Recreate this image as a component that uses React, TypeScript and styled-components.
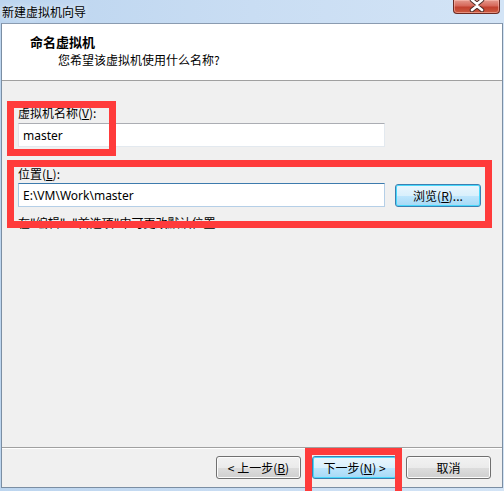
import React from "react";
import styled, { createGlobalStyle, css } from "styled-components";

const Global = createGlobalStyle`
  html, body { margin: 0; padding: 0; background: #c4dbf3; }
  body { font-family: "Noto Sans CJK SC", "Noto Sans", sans-serif; font-size: 12px; color: #000; }
`;

const Win = styled.div`
  position: relative;
  width: 504px;
  height: 491px;
  overflow: hidden;
  display: flex;
  flex-direction: column;
  background: linear-gradient(90deg, #bcd5ef 0%, #c9ddf3 50%, #d3e4f6 100%);
`;

const TitleBar = styled.div`
  height: 23px;
  display: flex;
  align-items: flex-start;
  justify-content: space-between;
  padding-left: 2px;
  box-sizing: border-box;
`;

const TitleText = styled.span`
  font-size: 12px;
  line-height: 23px;
  color: #000;
  text-shadow: 0 0 6px rgba(255, 255, 255, 0.9);
`;

const CloseBtn = styled.div`
  width: 47px;
  height: 14px;
  margin-right: 4px;
  box-sizing: border-box;
  border: 1px solid #6b2a22;
  border-top: none;
  border-radius: 0 0 4px 4px;
  background: linear-gradient(#e59a8d 0%, #d6685a 45%, #c2412f 55%, #cc5a3f 100%);
  display: flex;
  align-items: flex-start;
  justify-content: center;
  box-shadow: inset 0 0 0 1px rgba(255, 200, 190, 0.5);
`;

const Client = styled.div`
  flex: 1;
  margin: 0 1px 3px 1px;
  border: 1px solid #7b8ea3;
  border-top-color: #8a9bb0;
  background: #f0f0f0;
  display: flex;
  flex-direction: column;
`;

const Header = styled.div`
  height: 57px;
  background: #fff;
  border-bottom: 1px solid #a0a0a0;
  padding: 9px 0 0 28px;
  box-sizing: border-box;
  flex: none;
`;

const HeadTitle = styled.div`
  font-size: 13px;
  font-weight: bold;
  line-height: 17px;
`;

const HeadSub = styled.div`
  font-size: 12px;
  line-height: 16px;
  margin: 2px 0 0 28px;
`;

const Body = styled.div`
  flex: 1;
  padding: 24px 0 0 16px;
  display: flex;
  flex-direction: column;
  align-items: flex-start;
`;

const Label = styled.div<{ $top: number }>`
  font-size: 12px;
  line-height: 15px;
  margin-top: ${(p) => p.$top}px;
`;

const Row = styled.div<{ $top?: number }>`
  display: flex;
  align-items: center;
  gap: 10px;
  margin-top: ${(p) => p.$top ?? 2}px;
`;

const Input = styled.div<{ $focused?: boolean }>`
  width: 367px;
  height: 24px;
  box-sizing: border-box;
  background: #fff;
  padding-left: 4px;
  display: flex;
  align-items: center;
  font-family: "Noto Sans", "Noto Sans CJK SC", sans-serif;
  font-size: 12px;
  border: 1px solid #e3e9ef;
  border-top-color: #abadb3;
  border-left-color: #e2e3ea;
  ${(p) =>
    p.$focused &&
    css`
      border-color: #b5cfe7;
      border-top-color: #3d7bad;
      border-left-color: #a4c9e3;
    `}
`;

const Btn = styled.div<{ $default?: boolean; $w?: number; $mr?: number }>`
  width: ${(p) => p.$w ?? 85}px;
  height: 23px;
  box-sizing: border-box;
  margin-right: ${(p) => p.$mr ?? 0}px;
  border: 1px solid #707070;
  border-radius: 3px;
  display: flex;
  align-items: center;
  justify-content: center;
  font-size: 12px;
  background: linear-gradient(#f2f2f2 0%, #ebebeb 50%, #dddddd 51%, #cfcfcf 100%);
  box-shadow: inset 0 0 0 1px #fcfcfc;
  ${(p) =>
    p.$default &&
    css`
      border-color: #3c7fb1;
      background: linear-gradient(#eaf6fd 0%, #d9f0fc 50%, #bee6fd 51%, #a7d9f5 100%);
      box-shadow: inset 0 0 0 1px #48d8fb;
    `}
`;

const Hint = styled.div`
  margin-top: 8px;
  font-size: 12px;
  line-height: 15px;
  color: #000;
`;

const Footer = styled.div`
  height: 40px;
  flex: none;
  border-top: 1px solid #a0a0a0;
  box-shadow: inset 0 1px 0 #ffffff;
  box-sizing: border-box;
  display: flex;
  justify-content: flex-end;
  align-items: flex-start;
  padding: 8px 11px 0 0;
`;

const Mark = styled.div<{ $x: number; $y: number; $w: number; $h: number }>`
  position: absolute;
  left: ${(p) => p.$x}px;
  top: ${(p) => p.$y}px;
  width: ${(p) => p.$w}px;
  height: ${(p) => p.$h}px;
  border: 7px solid #ff3b3b;
  box-sizing: border-box;
  pointer-events: none;
`;

export default function App() {
  return (
    <>
      <Global />
      <Win>
        <TitleBar>
          <TitleText>新建虚拟机向导</TitleText>
          <CloseBtn>
            <svg width="16" height="12" viewBox="0 0 16 12">
              <path
                d="M3 0 L8 4 L13 0 M3 10 L8 6 L13 10"
                stroke="#4a2a26"
                strokeWidth="4.5"
                fill="none"
                strokeLinecap="round"
              />
              <path
                d="M3 0 L8 4 L13 0 M3 10 L8 6 L13 10"
                stroke="#ffffff"
                strokeWidth="2.6"
                fill="none"
                strokeLinecap="round"
              />
            </svg>
          </CloseBtn>
        </TitleBar>
        <Client>
          <Header>
            <HeadTitle>命名虚拟机</HeadTitle>
            <HeadSub>您希望该虚拟机使用什么名称?</HeadSub>
          </Header>
          <Body>
            <Label $top={0}>
              虚拟机名称(<u>V</u>):
            </Label>
            <Row $top={3}>
              <Input>master</Input>
            </Row>
            <Label $top={19}>
              位置(<u>L</u>):
            </Label>
            <Row>
              <Input $focused>E:\VM\Work\master</Input>
              <Btn $default $w={86}>
                浏览(<u>R</u>)...
              </Btn>
            </Row>
            <Hint>在"编辑"&gt;"首选项"中可更改默认位置</Hint>
          </Body>
          <Footer>
            <Btn $mr={11}>
              &lt; 上一步(<u>B</u>)
            </Btn>
            <Btn $default $mr={9}>
              下一步(<u>N</u>) &gt;
            </Btn>
            <Btn>取消</Btn>
          </Footer>
        </Client>
        <Mark $x={7} $y={101} $w={109} $h={55} />
        <Mark $x={7} $y={160} $w={485} $h={68} />
        <Mark $x={305} $y={448} $w={97} $h={50} />
      </Win>
    </>
  );
}
